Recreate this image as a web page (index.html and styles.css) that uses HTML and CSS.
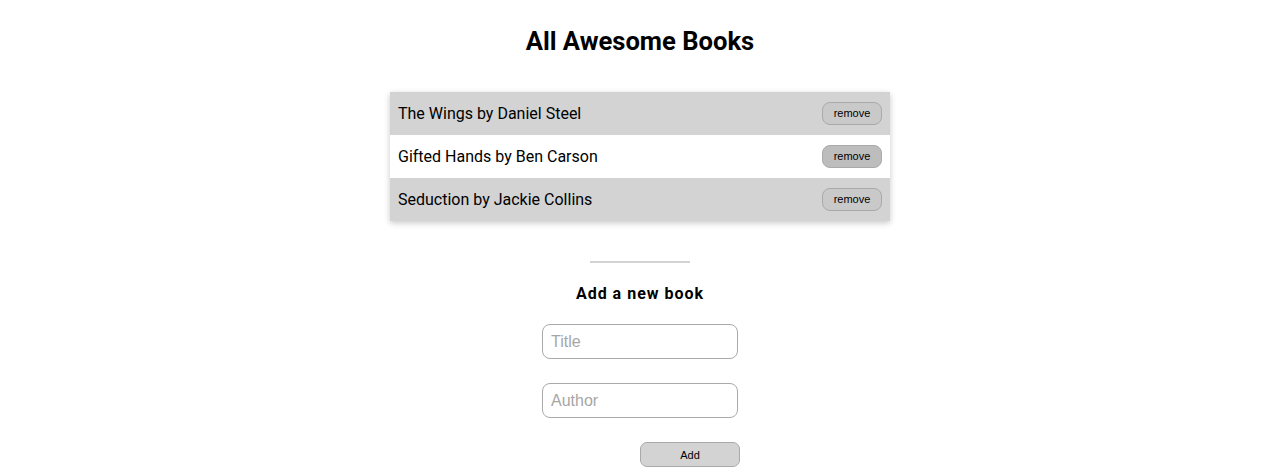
FILE: index.html
```html
<!DOCTYPE html>
<html lang="en">
<head>
<meta charset="utf-8">
<title>Awesome Books</title>
<link rel="stylesheet" href="styles.css">
</head>
<body>
  <h1 class="title">All Awesome Books</h1>
  <ul class="book-list">
    <li class="book odd"><span>The Wings by Daniel Steel</span><button class="remove">remove</button></li>
    <li class="book even"><span>Gifted Hands by Ben Carson</span><button class="remove">remove</button></li>
    <li class="book odd"><span>Seduction by Jackie Collins</span><button class="remove">remove</button></li>
  </ul>
  <hr class="divider">
  <h2 class="subtitle">Add a new book</h2>
  <form class="add-form">
    <input class="field" type="text" placeholder="Title">
    <input class="field" type="text" placeholder="Author">
    <button class="add" type="button">Add</button>
  </form>
</body>
</html>
```
FILE: styles.css
```css
* { box-sizing: border-box; }
body {
  margin: 0;
  font-family: Roboto, "Liberation Sans", Arial, sans-serif;
  color: #000;
  background: #fff;
  display: flex;
  flex-direction: column;
  align-items: center;
}
.title {
  margin: 27px 0 36px;
  font-size: 25.6px;
  line-height: 29px;
  font-weight: 700;
}
.book-list {
  list-style: none;
  margin: 0;
  padding: 0;
  width: 500px;
  box-shadow: 0 2px 6px rgba(0,0,0,0.22);
}
.book {
  height: 43px;
  display: flex;
  align-items: center;
  justify-content: space-between;
  padding: 0 8px;
  font-size: 16px;
}
.book.odd { background: #d3d3d3; }
.book.even { background: #fff; }
.remove {
  width: 60px;
  height: 23px;
  border: 1px solid #a9a9a9;
  border-radius: 8px;
  background: #c9c9c9;
  font-family: "Liberation Sans", Arial, sans-serif;
  font-size: 11px;
  color: #000;
  padding: 0;
  margin-bottom: 1px;
}
.book.even .remove { background: #bdbdbd; }
.divider {
  width: 100px;
  margin: 40px 0 0;
  border: 0;
  border-top: 2px solid #d3d3d3;
}
.subtitle {
  margin: 21px 0 20px;
  font-size: 16px;
  line-height: 20px;
  font-weight: 700;
  letter-spacing: 1px;
}
.add-form {
  display: flex;
  flex-direction: column;
  align-items: center;
  gap: 24px;
}
.field {
  width: 196px;
  height: 35px;
  border: 1px solid #a9a9a9;
  border-radius: 8px;
  padding: 0 8px;
  font-family: "Liberation Sans", Arial, sans-serif;
  font-size: 16px;
  outline: none;
}
.field::placeholder { color: #a6a6a6; }
.add {
  margin-left: 100px;
  width: 100px;
  height: 25px;
  border: 1px solid #a9a9a9;
  border-radius: 7px;
  background: #d3d3d3;
  font-family: "Liberation Sans", Arial, sans-serif;
  font-size: 11px;
  color: #000;
  padding: 0;
}
```
